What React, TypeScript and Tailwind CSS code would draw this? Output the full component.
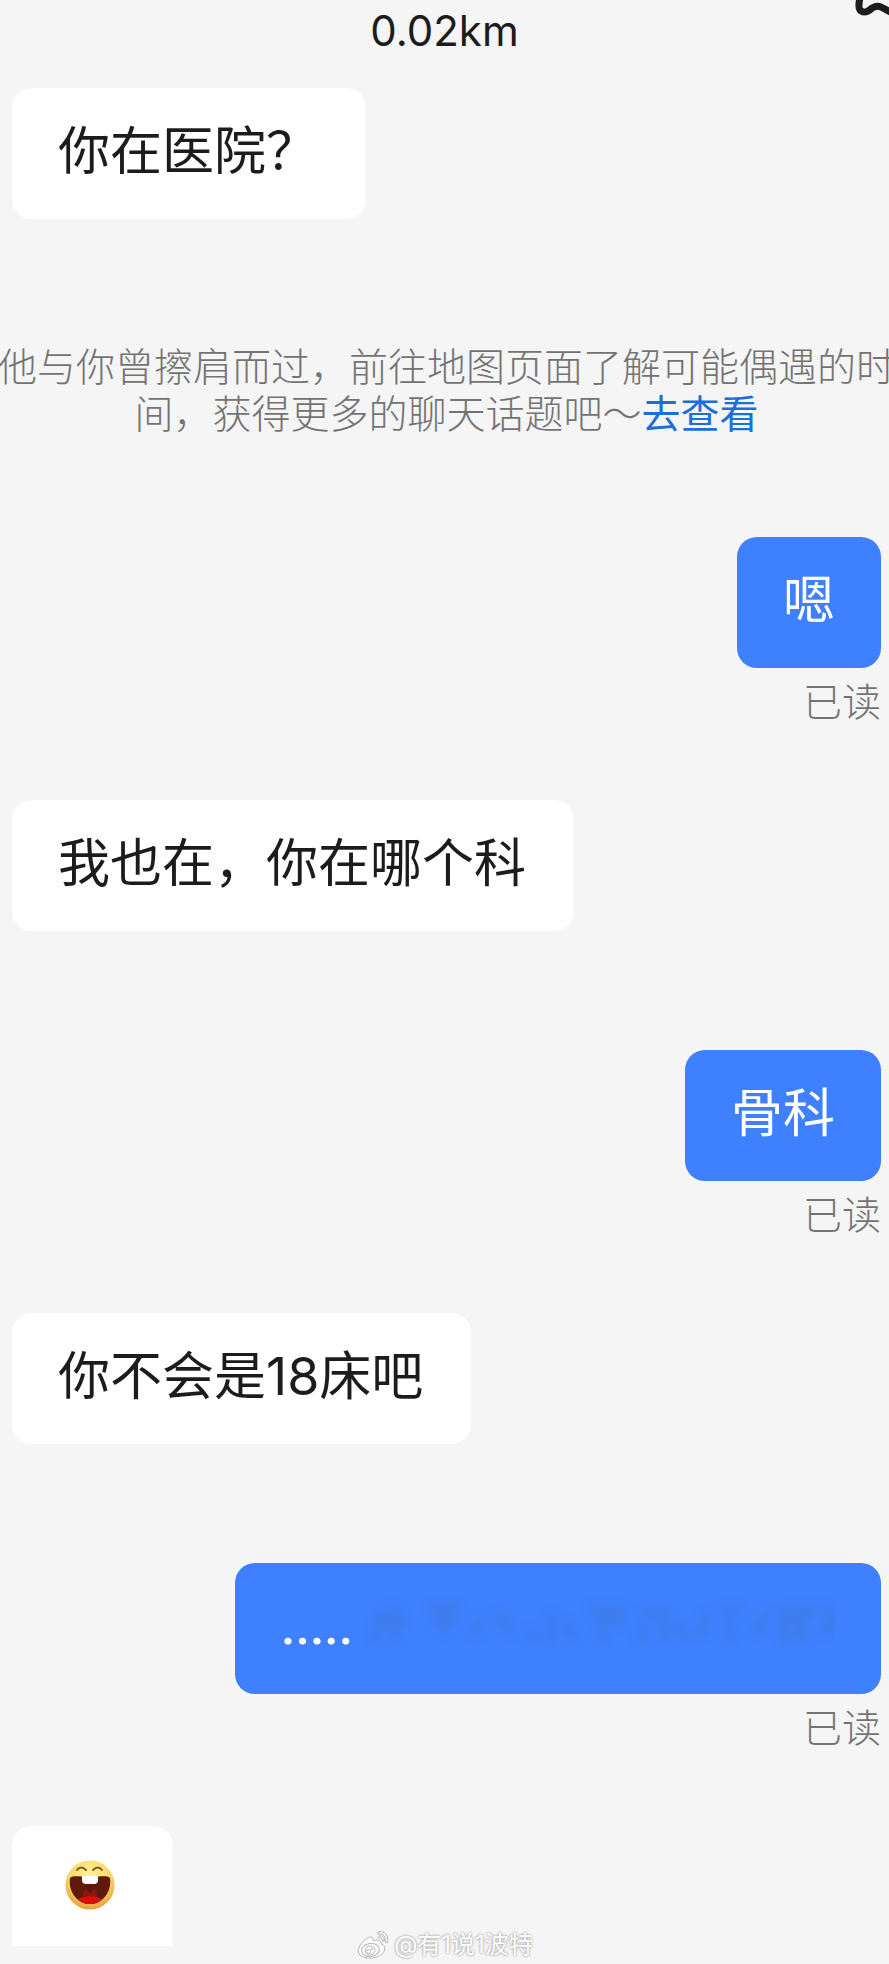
import type { ReactNode } from "react";

type Message = {
  from: "me" | "them";
  body: ReactNode;
};

const before: Message[] = [{ from: "them", body: "你在医院？" }];

const after: Message[] = [
  { from: "me", body: "嗯" },
  { from: "them", body: "我也在，你在哪个科" },
  { from: "me", body: "骨科" },
  { from: "them", body: "你不会是18床吧" },
  { from: "me", body: <ErasedText /> },
];

export default function App() {
  return (
    <main className="relative min-h-screen overflow-hidden bg-[#f5f5f5] pb-4 font-['Inter','Noto_Sans_CJK_SC',sans-serif] text-[#1c1c1c]">
      <header className="relative flex h-[88px] justify-center pt-2">
        <h1 className="text-[42px] leading-[46px] font-normal">0.02km</h1>
        <button aria-label="更多" className="absolute top-0 right-0">
          <MoreIcon />
        </button>
      </header>

      {before.map((m, i) => (
        <Bubble key={i} message={m} />
      ))}

      <p className="-mr-2 -ml-1 mt-[124px] mb-[100px] text-center text-[39px] leading-[47px] font-light text-[#737373]">
        他与你曾擦肩而过，前往地图页面了解可能偶遇的时间，获得更多的聊天话题吧～
        <a href="#map" className="font-normal text-[#1a6fd8]">
          去查看
        </a>
      </p>

      {after.map((m, i) => (
        <Bubble key={i} message={m} />
      ))}

      <div className="ml-3 flex w-[161px] rounded-t-[20px] bg-white pt-[34px] pr-[54px] pb-[36px] pl-[53px]">
        <LaughIcon />
      </div>

      {/* Watermark */}
      <footer className="absolute inset-x-0 bottom-1 flex items-center justify-center gap-1 text-white">
        <WeiboIcon />
        <span className="text-[24px] leading-7 [text-shadow:0_0_2px_#a0a0a0,0_0_3px_#b0b0b0]">
          @有1说1波特
        </span>
      </footer>
    </main>
  );
}

function Bubble({ message }: { message: Message }) {
  if (message.from === "them") {
    return (
      <div className="mb-[119px] ml-3 flex">
        <p className="rounded-[20px] bg-white pt-[38px] pr-12 pb-[41px] pl-[46px] text-[52px] leading-[52px]">
          {message.body}
        </p>
      </div>
    );
  }

  return (
    <div className="mr-2 mb-[74px] flex flex-col items-end">
      <div className="rounded-[20px] bg-[#3e80fd] px-[46px] pt-[38px] pb-[41px] text-[52px] leading-[52px] text-white">
        {message.body}
      </div>
      <span className="mt-[10px] text-[39px] leading-[48px] font-light text-[#737373]">
        已读
      </span>
    </div>
  );
}

// dots followed by the smudge that is left of the removed words
function ErasedText() {
  return (
    <div className="flex w-[554px] items-center">
      <span className="font-['Roboto',sans-serif] font-medium">.....</span>
      <svg
        viewBox="0 0 486 52"
        className="-mt-2 h-[52px] min-w-0 flex-1 opacity-25"
        fill="none"
        stroke="#3f6fc0"
        strokeWidth="9"
        aria-hidden="true"
      >
        <defs>
          <filter id="smudge" x="-5%" y="-30%" width="110%" height="160%">
            <feGaussianBlur stdDeviation="5" />
          </filter>
        </defs>
        <g filter="url(#smudge)">
          <path d="M30 12l-10 34M42 8v36M30 26h26M76 10h32M80 22h26M92 8v30M130 20l-8 20M144 14l18 24M176 32l12 16M200 16v32M214 24l10 20" />
          <path d="M238 12h36M246 24h28M256 8l-6 40M290 16h30M298 26l-10 20M314 14v32M326 26l14 18M358 14l-8 26M370 12h22M380 20v24M404 38l18-26" />
          <path d="M436 10v36M444 14h22M452 10v34M474 12l10 8l-8 18" strokeWidth="12" />
        </g>
      </svg>
    </div>
  );
}

function MoreIcon() {
  return (
    <svg
      width="36"
      height="18"
      viewBox="0 0 36 18"
      fill="none"
      stroke="#1c1c1c"
      strokeWidth="7"
      strokeLinecap="round"
      aria-hidden="true"
    >
      <path d="M7.500 -5C6 2 5 7 7 10C9 12.500 13 12.500 16 10.500C20 7 24 4.500 29 7.500L39 13" />
    </svg>
  );
}

function LaughIcon() {
  return (
    <svg width="50" height="50" viewBox="0 0 50 50" role="img" aria-label="大笑">
      <defs>
        <radialGradient id="face" cx="50%" cy="30%" r="70%">
          <stop offset="0" stopColor="#fff3a0" />
          <stop offset="0.6" stopColor="#f9d866" />
          <stop offset="1" stopColor="#e6a040" />
        </radialGradient>
        <clipPath id="mouth">
          <path d="M5 18C9 15 14 17 25 17S41 15 45 18C47 31 38 44 25 44S3 31 5 18Z" />
        </clipPath>
      </defs>
      <circle cx="25" cy="25" r="24.500" fill="url(#face)" />
      <path
        d="M12 10Q16 5 21 10M28 10Q33 5 37 10"
        fill="none"
        stroke="#7a5a1c"
        strokeWidth="2"
        strokeLinecap="round"
      />
      <g clipPath="url(#mouth)">
        <rect width="50" height="50" fill="#5e1a0c" />
        <ellipse cx="25" cy="43" rx="14" ry="7" fill="#d80f0c" />
        <path d="M18 36V32Q20 28 23 31L25 34L27 31Q30 28 32 32V36Z" fill="#8e1410" />
      </g>
      <path d="M17 16H33V20Q33 24 29 24H21Q17 24 17 20Z" fill="#fff" />
    </svg>
  );
}

function WeiboIcon() {
  return (
    <svg
      width="34"
      height="30"
      viewBox="0 0 34 30"
      fill="#fff"
      stroke="#b4b4b4"
      strokeWidth="1"
      aria-hidden="true"
    >
      <path d="M12 8C15 6 18 7 17 11C21 9 26 10 25 14C29 15 30 19 27 23C22 29 9 30 4 25C-1 20 6 11 12 8Z" />
      <ellipse cx="14.500" cy="20" rx="9" ry="6.500" transform="rotate(-8 14.500 20)" />
      <ellipse cx="14" cy="20.500" rx="5" ry="4.500" />
      <circle cx="12.500" cy="21.500" r="2" />
      <circle cx="16" cy="19" r="0.800" />
      <path d="M22 2C28 0 34 6 31 13L29 12C31 7 27 3 22 4Z" />
      <path d="M23 6C26 5 29 8 28 11L26 11C27 9 25 8 23 8Z" />
    </svg>
  );
}
